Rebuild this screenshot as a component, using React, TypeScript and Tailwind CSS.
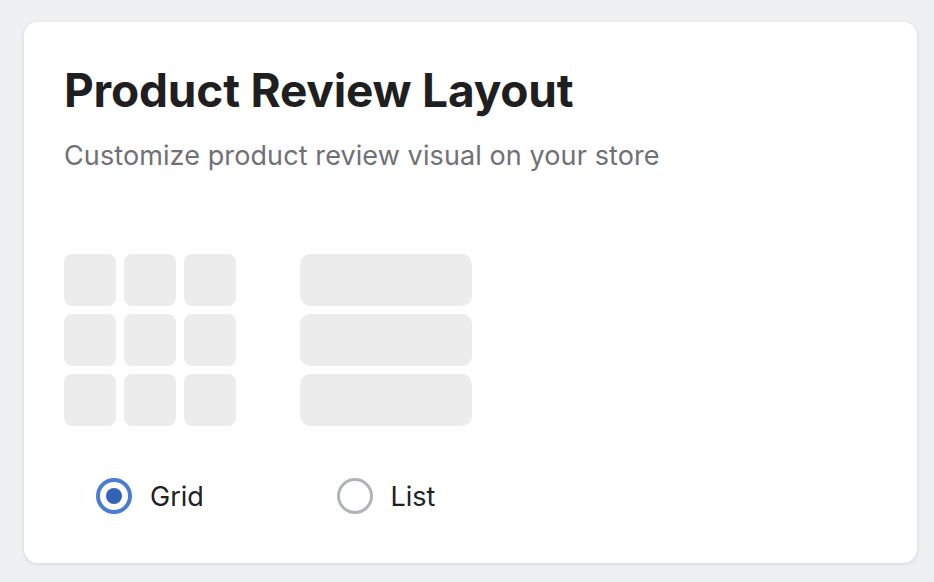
const tiles = Array.from({ length: 9 });

const Option = ({ label, checked, variant }: { label: string; checked: boolean; variant: "grid" | "list" }) => {
  return (
    <div className="flex flex-col items-center w-[172px]">
      <div className="w-[172px] h-[172px] overflow-hidden">
        {variant === "grid" ? (
          <div className="grid grid-cols-3 gap-2 w-[172px]">
            {tiles.map((_, i) => (
              <div key={i} className="h-[52px] rounded-lg bg-[#ececec] blur-[0.5px]" />
            ))}
          </div>
        ) : (
          <div className="flex flex-col gap-2 w-[172px]">
            {[0, 1, 2].map((i) => (
              <div key={i} className="h-[52px] rounded-[10px] bg-[#ececec] blur-[0.5px]" />
            ))}
          </div>
        )}
      </div>
      <label className="mt-[52px] flex items-center gap-[18px] cursor-pointer">
        {checked ? (
          <span className="w-9 h-9 rounded-full border-4 border-[#4a7dd2] flex items-center justify-center">
            <span className="w-4 h-4 rounded-full bg-[#3562b6]" />
          </span>
        ) : (
          <span className="w-9 h-9 rounded-full border-[3px] border-[#b1b4ba]" />
        )}
        <span className="text-[27px] leading-none text-[#202124]">{label}</span>
      </label>
    </div>
  );
};

export default function App() {
  return (
    <div className="w-[934px] h-[582px] bg-[#eff0f2] pt-[22px] pl-6 font-['Inter',sans-serif]">
      <div className="w-[893px] h-[541px] bg-white rounded-[14px] shadow-[0_1px_4px_rgba(0,0,0,0.12)] pl-10 pt-[45px]">
        <h1 className="text-[46px] leading-none font-bold text-[#1f1f21] tracking-[-0.2px]">
          Product Review Layout
        </h1>
        <p className="mt-[29px] text-[27px] leading-none text-[#707075] tracking-[0.1px]">
          Customize product review visual on your store
        </p>
        <div className="mt-[85px] flex gap-16">
          <Option label="Grid" checked variant="grid" />
          <Option label="List" checked={false} variant="list" />
        </div>
      </div>
    </div>
  );
}
